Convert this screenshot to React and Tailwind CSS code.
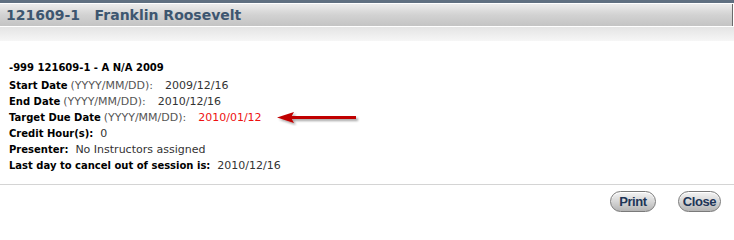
const rows = [
  { label: 'Start Date', hint: '(YYYY/MM/DD):', value: '2009/12/16' },
  { label: 'End Date', hint: '(YYYY/MM/DD):', value: '2010/12/16' },
  { label: 'Target Due Date', hint: '(YYYY/MM/DD):', value: '2010/01/12', red: true },
  { label: 'Credit Hour(s):', value: '0' },
  { label: 'Presenter:', value: 'No Instructors assigned' },
  { label: 'Last day to cancel out of session is:', value: '2010/12/16' },
];

const PillButton = ({ children, width }) => (
  <button className={`${width} h-[21px] rounded-full border border-[#7a7a7a] bg-gradient-to-b from-[#f4f4f4] via-[#d6d6d6] to-[#b4b4b4] shadow-[inset_0_1px_0_#fff] text-[13px] tracking-[-0.4px] font-bold text-[#1d3557] leading-none [font-family:'Liberation_Sans',Arial,sans-serif]`}>
    {children}
  </button>
);

const Arrow = () => (
  <svg width="84" height="16" viewBox="0 0 84 16" className="ml-[14px] self-center">
    <defs>
      <filter id="sh" x="-10%" y="-50%" width="130%" height="220%">
        <feDropShadow dx="2" dy="2" stdDeviation="1.2" floodColor="#000" floodOpacity="0.35" />
      </filter>
    </defs>
    <g filter="url(#sh)">
      <rect x="14" y="6" width="66" height="3" fill="#c00000" />
      <polygon points="1,7.5 18,2 15,7.5 18,13" fill="#c00000" />
    </g>
  </svg>
);

export default function App() {
  return (
    <div className="w-[734px] h-[223px] bg-white [font-family:'DejaVu_Sans',Verdana,sans-serif] text-[10px]">
      <div className="h-[3px] bg-[#5f6f80]" />
      <div className="mt-[1px] mr-[1px] h-[22px] border-r border-[#6b6b6b] bg-gradient-to-b from-[#ececec] via-[#d2d2d2] to-[#c4c4c4] flex items-center px-[6px]">
        <h1 className="text-[14px] font-bold text-[#3d5670] whitespace-pre">121609-1   Franklin Roosevelt</h1>
      </div>
      <div className="mt-[1px] h-[14px] bg-gradient-to-b from-[#e4e4e4] to-[#f6f6f6]" />

      <div className="pl-[9px] pt-[19px] h-[143px]">
        <div className="font-bold text-black leading-[16px]">-999 121609-1 - A N/A 2009</div>
        <div className="mt-[2px]">
          {rows.map((r) => (
            <div key={r.label} className="flex items-baseline h-[16px] leading-[16px] whitespace-pre">
              <span className="font-bold text-black">{r.label}</span>
              {r.hint && <span className="ml-[3px] text-[11px] text-[#555]">{r.hint}</span>}
              <span className={`${r.hint ? 'ml-[12px]' : 'ml-[7px]'} text-[11px] ${r.red ? 'text-[#ee1111]' : 'text-[#333]'}`}>
                {r.value}
              </span>
              {r.red && <Arrow />}
            </div>
          ))}
        </div>
      </div>

      <div className="border-t border-[#d4d4d4] flex justify-end gap-[22px] pt-[6px] pr-[13px]">
        <PillButton width="w-[46px]">Print</PillButton>
        <PillButton width="w-[43px]">Close</PillButton>
      </div>
    </div>
  );
}
